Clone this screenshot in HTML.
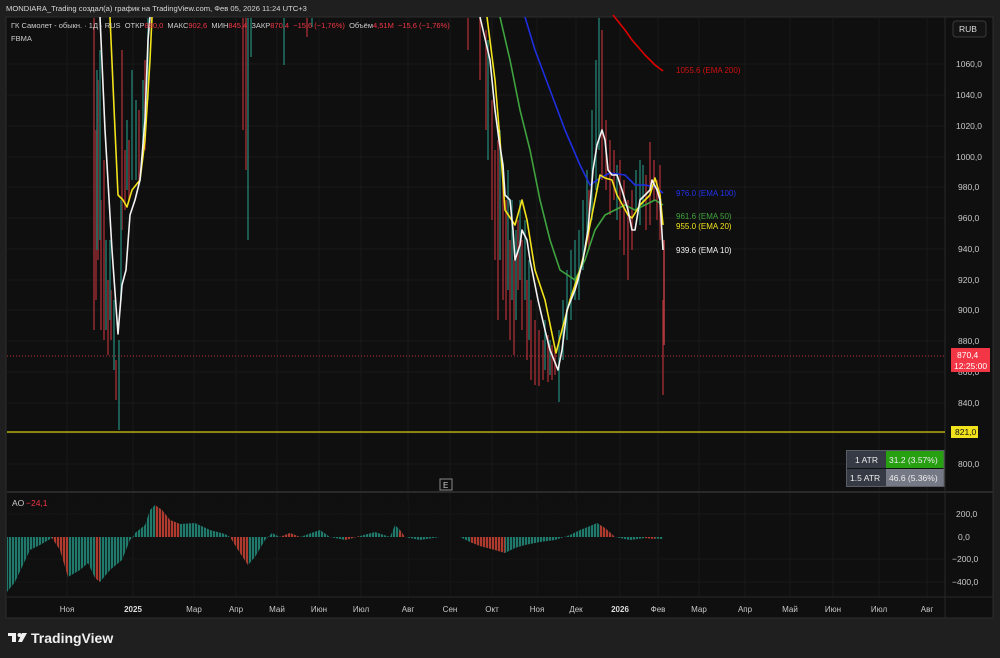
<!DOCTYPE html>
<html><head><meta charset="utf-8"><style>
body{margin:0;width:1000px;height:658px;background:#1f1f1f;font-family:"Liberation Sans",sans-serif;overflow:hidden;position:relative}
.t{position:absolute;white-space:nowrap}
</style></head><body>
<div class="t" style="left:6px;top:4px;font-size:7.6px;color:#d8d8d8">MONDIARA_Trading создал(а) график на TradingView.com, Фев 05, 2026 11:24 UTC+3</div>
<svg style="position:absolute;left:0;top:0" width="1000" height="658" font-family="Liberation Sans, sans-serif">
<defs><pattern id="bars" width="3" height="10" patternUnits="userSpaceOnUse"><rect x="2.2" y="0" width="0.8" height="10" fill="#0f0f0f"/></pattern></defs>
<rect x="6" y="17" width="987" height="601" fill="#0f0f0f" stroke="#2e2e2e"/>
<g stroke="#181818" stroke-width="1">
<line x1="7" y1="64" x2="945" y2="64"/><line x1="7" y1="95" x2="945" y2="95"/><line x1="7" y1="126" x2="945" y2="126"/><line x1="7" y1="157" x2="945" y2="157"/><line x1="7" y1="187" x2="945" y2="187"/><line x1="7" y1="218" x2="945" y2="218"/><line x1="7" y1="249" x2="945" y2="249"/><line x1="7" y1="280" x2="945" y2="280"/><line x1="7" y1="310" x2="945" y2="310"/><line x1="7" y1="341" x2="945" y2="341"/><line x1="7" y1="372" x2="945" y2="372"/><line x1="7" y1="403" x2="945" y2="403"/><line x1="7" y1="433" x2="945" y2="433"/><line x1="7" y1="464" x2="945" y2="464"/>
<line x1="7" y1="514" x2="945" y2="514"/><line x1="7" y1="559" x2="945" y2="559"/><line x1="7" y1="582" x2="945" y2="582"/>
<line x1="67" y1="18" x2="67" y2="597"/><line x1="133" y1="18" x2="133" y2="597"/><line x1="194" y1="18" x2="194" y2="597"/><line x1="236" y1="18" x2="236" y2="597"/><line x1="277" y1="18" x2="277" y2="597"/><line x1="319" y1="18" x2="319" y2="597"/><line x1="361" y1="18" x2="361" y2="597"/><line x1="408" y1="18" x2="408" y2="597"/><line x1="450" y1="18" x2="450" y2="597"/><line x1="492" y1="18" x2="492" y2="597"/><line x1="537" y1="18" x2="537" y2="597"/><line x1="576" y1="18" x2="576" y2="597"/><line x1="620" y1="18" x2="620" y2="597"/><line x1="658" y1="18" x2="658" y2="597"/><line x1="699" y1="18" x2="699" y2="597"/><line x1="745" y1="18" x2="745" y2="597"/><line x1="790" y1="18" x2="790" y2="597"/><line x1="833" y1="18" x2="833" y2="597"/><line x1="879" y1="18" x2="879" y2="597"/><line x1="927" y1="18" x2="927" y2="597"/>
</g>
<line x1="945" y1="17" x2="945" y2="618" stroke="#2a2a2a"/>
<line x1="7" y1="492" x2="993" y2="492" stroke="#2a2a2a" stroke-width="2"/>
<line x1="7" y1="597" x2="993" y2="597" stroke="#2a2a2a"/>
<g stroke-width="1.6">
<g stroke="#8e2a2e">
<line x1="94" y1="18" x2="94" y2="330"/><line x1="96" y1="130" x2="96" y2="300"/><line x1="98" y1="80" x2="98" y2="260"/><line x1="101" y1="200" x2="101" y2="330"/><line x1="104" y1="160" x2="104" y2="340"/><line x1="108" y1="280" x2="108" y2="355"/><line x1="111" y1="290" x2="111" y2="340"/><line x1="116" y1="360" x2="116" y2="400"/><line x1="122" y1="50" x2="122" y2="230"/><line x1="125" y1="150" x2="125" y2="210"/><line x1="129" y1="140" x2="129" y2="200"/><line x1="139" y1="110" x2="139" y2="180"/><line x1="145" y1="60" x2="145" y2="150"/>
<line x1="243" y1="18" x2="243" y2="130"/><line x1="246" y1="18" x2="246" y2="170"/><line x1="307" y1="18" x2="307" y2="37"/>
<line x1="468" y1="18" x2="468" y2="50"/><line x1="480" y1="18" x2="480" y2="80"/><line x1="486" y1="30" x2="486" y2="130"/><line x1="492" y1="100" x2="492" y2="220"/><line x1="495" y1="150" x2="495" y2="260"/><line x1="498" y1="140" x2="498" y2="320"/><line x1="503" y1="180" x2="503" y2="300"/><line x1="506" y1="200" x2="506" y2="320"/><line x1="510" y1="240" x2="510" y2="340"/><line x1="514" y1="260" x2="514" y2="355"/><line x1="518" y1="220" x2="518" y2="290"/><line x1="522" y1="240" x2="522" y2="330"/><line x1="527" y1="280" x2="527" y2="360"/><line x1="531" y1="300" x2="531" y2="380"/><line x1="535" y1="320" x2="535" y2="385"/><line x1="539" y1="330" x2="539" y2="386"/><line x1="543" y1="340" x2="543" y2="380"/><line x1="548" y1="335" x2="548" y2="382"/><line x1="552" y1="345" x2="552" y2="380"/><line x1="555" y1="350" x2="555" y2="375"/>
<line x1="589" y1="190" x2="589" y2="250"/><line x1="602" y1="30" x2="602" y2="180"/><line x1="606" y1="120" x2="606" y2="190"/><line x1="610" y1="140" x2="610" y2="215"/><line x1="614" y1="150" x2="614" y2="200"/><line x1="620" y1="160" x2="620" y2="240"/><line x1="624" y1="180" x2="624" y2="255"/><line x1="628" y1="200" x2="628" y2="280"/><line x1="632" y1="190" x2="632" y2="250"/><line x1="646" y1="175" x2="646" y2="230"/><line x1="650" y1="142" x2="650" y2="225"/><line x1="654" y1="160" x2="654" y2="200"/><line x1="657" y1="180" x2="657" y2="220"/><line x1="660" y1="165" x2="660" y2="240"/><line x1="663" y1="300" x2="663" y2="395"/>
</g>
<g stroke="#1f6e62">
<line x1="97" y1="70" x2="97" y2="250"/><line x1="100" y1="50" x2="100" y2="240"/><line x1="106" y1="240" x2="106" y2="330"/><line x1="110" y1="240" x2="110" y2="320"/><line x1="114" y1="300" x2="114" y2="370"/><line x1="119" y1="340" x2="119" y2="430"/><line x1="121" y1="200" x2="121" y2="300"/><line x1="127" y1="120" x2="127" y2="190"/><line x1="132" y1="70" x2="132" y2="180"/><line x1="136" y1="100" x2="136" y2="180"/><line x1="143" y1="80" x2="143" y2="150"/><line x1="148" y1="18" x2="148" y2="100"/>
<line x1="248" y1="18" x2="248" y2="240"/><line x1="251" y1="18" x2="251" y2="57"/><line x1="284" y1="18" x2="284" y2="65"/><line x1="312" y1="18" x2="312" y2="27"/>
<line x1="488" y1="40" x2="488" y2="160"/><line x1="500" y1="130" x2="500" y2="260"/><line x1="508" y1="170" x2="508" y2="290"/><line x1="512" y1="200" x2="512" y2="300"/><line x1="516" y1="230" x2="516" y2="320"/><line x1="520" y1="200" x2="520" y2="280"/><line x1="525" y1="220" x2="525" y2="300"/><line x1="529" y1="260" x2="529" y2="340"/><line x1="545" y1="320" x2="545" y2="370"/><line x1="550" y1="340" x2="550" y2="375"/><line x1="559" y1="330" x2="559" y2="402"/><line x1="563" y1="300" x2="563" y2="360"/><line x1="567" y1="270" x2="567" y2="340"/><line x1="571" y1="250" x2="571" y2="320"/><line x1="575" y1="240" x2="575" y2="300"/><line x1="579" y1="230" x2="579" y2="300"/><line x1="583" y1="200" x2="583" y2="270"/><line x1="587" y1="170" x2="587" y2="240"/><line x1="592" y1="110" x2="592" y2="220"/><line x1="596" y1="60" x2="596" y2="190"/><line x1="599" y1="18" x2="599" y2="150"/><line x1="617" y1="165" x2="617" y2="220"/><line x1="636" y1="170" x2="636" y2="210"/><line x1="640" y1="160" x2="640" y2="225"/><line x1="643" y1="165" x2="643" y2="205"/>
</g>
<line x1="664" y1="240" x2="664" y2="345" stroke="#b33a3f" stroke-width="1.6"/>
</g>
<g fill="none" stroke-width="1.6" stroke-linejoin="round">
<polyline stroke="#d00" points="613,15 625,30 632,40 645,55 655,65 663,71"/>
<polyline stroke="#1e2fe0" points="525,17 535,50 550,90 565,130 580,165 590,185 600,178 610,173 625,175 635,185 645,185 655,187 663,193"/>
<polyline stroke="#3fa33f" points="500,17 510,60 520,110 530,150 540,200 550,240 560,270 575,280 585,260 595,230 605,215 615,210 625,205 635,210 645,205 655,200 663,205"/>
<polyline stroke="#f2e21c" points="110,17 115,130 118,195 123,200 127,207 132,190 140,180 145,140 150,60 152,17"/>
<polyline stroke="#f2e21c" points="487,17 495,80 500,140 505,210 515,225 522,200 527,220 535,270 545,300 556,353 562,330 570,300 580,270 585,250 590,225 600,175 605,178 612,180 617,195 628,215 632,218 640,205 650,195 655,178 660,195 663,225"/>
<polyline stroke="#f2f2f2" points="100,17 105,130 112,250 118,334 122,285 126,270 130,215 135,200 140,180 145,120 148,40 150,17"/>
<polyline stroke="#f2f2f2" points="480,17 490,60 495,110 499,140 503,165 505,195 510,200 513,230 515,260 520,245 522,230 527,240 530,260 538,300 545,330 550,350 558,370 562,350 567,310 575,290 578,280 583,260 588,230 593,170 597,145 602,130 605,140 608,170 612,175 617,175 622,190 628,210 632,230 635,230 640,200 645,195 650,190 652,180 657,190 660,200 663,250"/>
</g>
<line x1="7" y1="356" x2="945" y2="356" stroke="#c2303a" stroke-dasharray="1,2"/>
<line x1="7" y1="432" x2="945" y2="432" stroke="#d8c70e" stroke-width="1.2"/>
<g font-size="8">
<text x="676" y="73" fill="#d01010">1055.6 (EMA 200)</text>
<text x="676" y="196" fill="#2233ee">976.0 (EMA 100)</text>
<text x="676" y="219" fill="#3fa33f">961.6 (EMA 50)</text>
<text x="676" y="229" fill="#f2e21c">955.0 (EMA 20)</text>
<text x="676" y="253" fill="#f2f2f2">939.6 (EMA 10)</text>
</g>
<g font-size="8.5" fill="#c8c8c8">
<text x="956" y="67">1060,0</text><text x="956" y="98">1040,0</text><text x="956" y="129">1020,0</text><text x="956" y="160">1000,0</text><text x="958" y="190">980,0</text><text x="958" y="221">960,0</text><text x="958" y="252">940,0</text><text x="958" y="283">920,0</text><text x="958" y="313">900,0</text><text x="958" y="344">880,0</text><text x="958" y="375">860,0</text><text x="958" y="406">840,0</text><text x="958" y="467">800,0</text>
<text x="956" y="517">200,0</text><text x="958" y="540">0,0</text><text x="952" y="562">−200,0</text><text x="952" y="585">−400,0</text>
</g>
<rect x="953" y="21" width="33" height="16" rx="3" fill="#141414" stroke="#3a3a3a"/>
<text x="959" y="32" font-size="8.5" fill="#ddd">RUB</text>
<rect x="951" y="348" width="39" height="24" fill="#f23645"/>
<text x="957" y="358" font-size="8.5" fill="#fff">870,4</text>
<text x="954" y="369" font-size="8.5" fill="#fff">12:25:00</text>
<rect x="951" y="426" width="27" height="12" fill="#f2e21c"/>
<text x="955" y="435" font-size="8.5" fill="#111">821,0</text>
<rect x="847" y="451" width="39" height="17" fill="#363a45"/><rect x="886" y="451" width="58" height="17" fill="#26a011"/>
<rect x="847" y="469" width="39" height="17" fill="#363a45"/><rect x="886" y="469" width="58" height="17" fill="#757885"/>
<rect x="846.5" y="450.5" width="97.5" height="36" fill="none" stroke="#5a5d66"/>
<g font-size="8.5" fill="#eee"><text x="855" y="463">1 ATR</text><text x="889" y="463">31.2 (3.57%)</text><text x="850" y="481">1.5 ATR</text><text x="889" y="481">46.6 (5.36%)</text></g>
<rect x="440" y="479" width="12" height="11" fill="#0f0f0f" stroke="#888"/>
<text x="443" y="488" font-size="8" fill="#ccc">E</text>
<g>
<polygon fill="#1f7a6c" points="7,537 7,592 15,582 30,550 40,545 52,538 60,550 68,577 80,570 88,563 95,578 100,582 110,570 122,560 130,540 133,537 135,533 145,525 150,510 155,505 162,510 170,520 180,524 195,523 210,530 225,534 230,537 240,553 248,565 255,557 265,540 272,533 280,537 290,533 300,537 320,530 330,537 345,540 360,536 375,532 390,537 395,525 400,530 405,537 420,540 440,537 460,537 470,542 480,546 495,550 505,553 515,548 525,545 540,542 555,540 570,535 580,530 590,526 597,523 605,528 615,537 630,540 645,538 663,539 663,537"/>
<g fill="#b03a2e">
<polygon points="52,537 52,538 60,550 68,577 68,537"/><polygon points="95,537 95,578 100,582 100,537"/><polygon points="155,537 155,505 162,510 170,520 180,524 180,537"/><polygon points="230,537 240,553 248,565 248,537"/><polygon points="280,537 290,533 300,537"/><polygon points="345,537 345,540 360,536 360,537"/><polygon points="398,537 400,530 405,537"/><polygon points="470,537 470,542 480,546 495,550 505,553 505,537"/><polygon points="600,537 600,525 605,528 615,537"/><polygon points="645,537 645,538 655,539 655,537"/>
</g>
<rect x="7" y="500" width="660" height="96" fill="url(#bars)"/>
</g>
<text x="12" y="506" font-size="8.5" fill="#ccc">AO</text><text x="26" y="506" font-size="8.5" fill="#f23645">−24,1</text>
<g font-size="8" fill="#c8c8c8" text-anchor="middle">
<text x="67" y="612">Ноя</text><text x="133" y="612" font-weight="bold" fill="#ddd">2025</text><text x="194" y="612">Мар</text><text x="236" y="612">Апр</text><text x="277" y="612">Май</text><text x="319" y="612">Июн</text><text x="361" y="612">Июл</text><text x="408" y="612">Авг</text><text x="450" y="612">Сен</text><text x="492" y="612">Окт</text><text x="537" y="612">Ноя</text><text x="576" y="612">Дек</text><text x="620" y="612" font-weight="bold" fill="#ddd">2026</text><text x="658" y="612">Фев</text><text x="699" y="612">Мар</text><text x="745" y="612">Апр</text><text x="790" y="612">Май</text><text x="833" y="612">Июн</text><text x="879" y="612">Июл</text><text x="927" y="612">Авг</text>
</g>
<g fill="#f0f0f0"><rect x="8" y="633" width="8" height="3"/><rect x="12" y="633" width="4" height="9"/><circle cx="19.5" cy="635" r="2"/><polygon points="22,633 27,633 22,642 18,642"/></g>
<text x="31" y="643" font-size="14" font-weight="bold" fill="#f0f0f0">TradingView</text>
</svg>
<div class="t" style="left:11px;top:21px;font-size:7.5px;color:#ccc">ГК Самолет - обыкн. · 1Д · RUS &nbsp;ОТКР<span style="color:#f23645">880,0</span> &nbsp;МАКС<span style="color:#f23645">902,6</span> &nbsp;МИН<span style="color:#f23645">845,4</span> &nbsp;ЗАКР<span style="color:#f23645">870,4 &nbsp;−15,6 (−1,76%)</span> &nbsp;Объём<span style="color:#f23645">4,51M &nbsp;−15,6 (−1,76%)</span></div>
<div class="t" style="left:11px;top:34px;font-size:7.5px;color:#ccc">FBMA</div>
</body></html>
